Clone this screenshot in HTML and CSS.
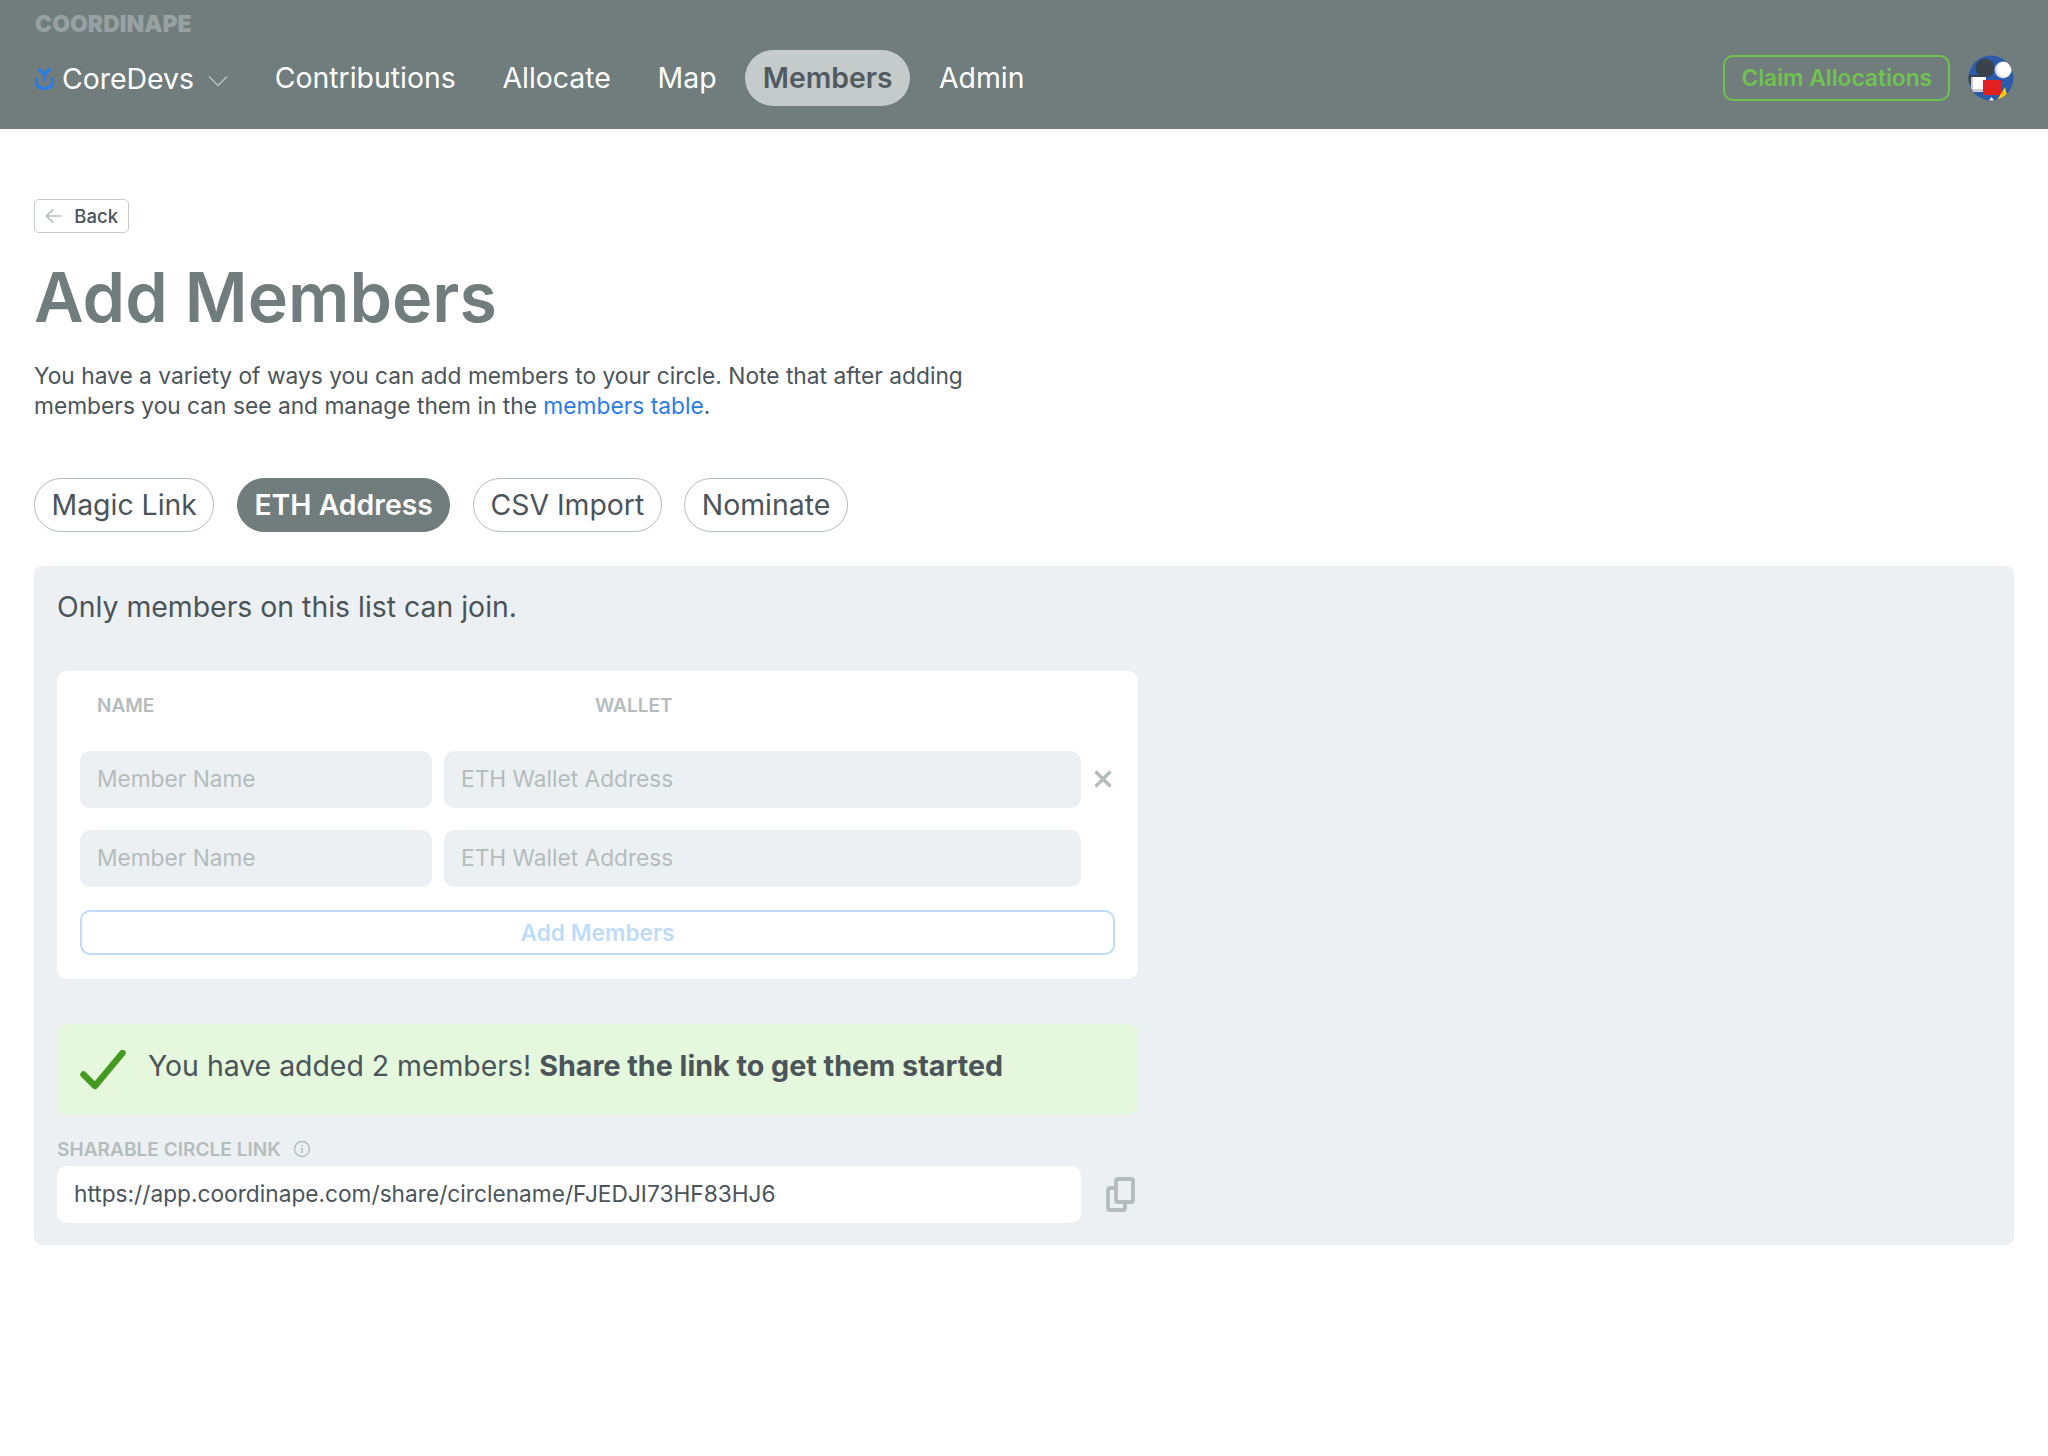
FILE: index.html
```html
<!DOCTYPE html>
<html lang="en">
<head>
<meta charset="utf-8">
<title>Add Members</title>
<link rel="stylesheet" href="styles.css">
</head>
<body>
<header class="topbar">
  <div class="brand">COORDINAPE</div>
  <div class="navrow">
    <nav class="nav">
      <a class="circle">
        <svg class="circle-logo" viewBox="0 0 19 23" width="19" height="23"><path d="M3.500 1.500 9.500 7.500l6-6M9.500 7.500v7" fill="none" stroke="#2b7ce9" stroke-width="3.200"/><path d="M1.600 10.500v5c0 3.800 3.500 5.800 7.900 5.800s7.900-2 7.900-5.800v-5" fill="none" stroke="#2b7ce9" stroke-width="3.200"/></svg>
        <span>CoreDevs</span>
        <svg class="chev" viewBox="0 0 20 12" width="20" height="12"><path d="M1 1.500 10 10.500l9-9" fill="none" stroke="#b9c0c0" stroke-width="1.500"/></svg>
      </a>
      <a class="link">Contributions</a>
      <a class="link">Allocate</a>
      <a class="link">Map</a>
      <a class="link active">Members</a>
      <a class="link">Admin</a>
    </nav>
    <div class="top-right">
      <a class="claim">Claim Allocations</a>
      <svg class="avatar" viewBox="0 0 46 46" width="46" height="46">
        <defs><clipPath id="av"><circle cx="23" cy="23" r="22.500"/></clipPath></defs>
        <g clip-path="url(#av)">
          <rect width="46" height="46" fill="#2b5bab"/>
          <circle cx="17" cy="13" r="9.500" fill="#3a434c"/>
          <rect x="0" y="20" width="14" height="9" fill="#3a434c"/>
          <circle cx="35" cy="15" r="8.500" fill="#c9cdd0"/>
          <circle cx="36" cy="14.500" r="7.500" fill="#fff"/>
          <rect x="3" y="22" width="15" height="15" fill="#c9cdd0"/>
          <rect x="5" y="22" width="13" height="12" fill="#fff"/>
          <rect x="15" y="25" width="18" height="15" fill="#e2201f"/>
          <path d="M29 45 37 32l3 12z" fill="#f5c518"/>
          <path d="M20 47l3.500-5 3.500 5z" fill="#fff"/>
        </g>
      </svg>
    </div>
  </div>
</header>
<main class="page">
  <a class="back">
    <svg viewBox="0 0 18 16" width="18" height="16"><path d="M17.500 8H1.500M8.500 1 1.500 8l7 7" fill="none" stroke="#b9c0c0" stroke-width="1.800"/></svg>
    <span>Back</span>
  </a>
  <h1 class="title">Add Members</h1>
  <p class="intro">You have a variety of ways you can add members to your circle. Note that after adding members you can see and manage them in the <a class="inline">members table</a>.</p>
  <div class="tabs">
    <a class="tab">Magic Link</a>
    <a class="tab on">ETH Address</a>
    <a class="tab">CSV Import</a>
    <a class="tab">Nominate</a>
  </div>
  <section class="panel">
    <p class="lead">Only members on this list can join.</p>
    <div class="card">
      <div class="heads"><span class="h-name">NAME</span><span class="h-wallet">WALLET</span></div>
      <div class="row">
        <div class="field name">Member Name</div>
        <div class="field wallet">ETH Wallet Address</div>
        <svg class="x" viewBox="0 0 18 18" width="18" height="18"><path d="M1.500 1.500l15 15M16.500 1.500l-15 15" fill="none" stroke="#b4bcbc" stroke-width="3.400"/></svg>
      </div>
      <div class="row">
        <div class="field name">Member Name</div>
        <div class="field wallet">ETH Wallet Address</div>
      </div>
      <a class="add">Add Members</a>
    </div>
    <div class="banner">
      <svg class="check" viewBox="0 0 46 40" width="46" height="40"><path d="M3.500 24.500 15 36 42.500 3" fill="none" stroke="#459820" stroke-width="6.500" stroke-linecap="round" stroke-linejoin="round"/></svg>
      <p class="banner-text">You have added 2 members! <strong>Share the link to get them started</strong></p>
    </div>
    <div class="link-label">SHARABLE CIRCLE LINK
      <svg viewBox="0 0 18 18" width="18" height="18"><circle cx="9" cy="9" r="7.500" fill="none" stroke="#b4bcbc" stroke-width="1.400"/><path d="M9 8v5M9 5v1.500" stroke="#b4bcbc" stroke-width="1.600"/></svg>
    </div>
    <div class="share-row">
      <div class="field url">https://app.coordinape.com/share/circlename/FJEDJI73HF83HJ6</div>
      <svg class="copy" viewBox="0 0 29 35" width="29" height="35"><rect x="10" y="2" width="17" height="23" rx="2" fill="none" stroke="#b4bcbc" stroke-width="3.800"/><path d="M10 11H4a2 2 0 0 0-2 2v18a2 2 0 0 0 2 2h13a2 2 0 0 0 2-2v-6" fill="none" stroke="#b4bcbc" stroke-width="3.800"/></svg>
    </div>
  </section>
</main>
</body>
</html>
```
FILE: styles.css
```css
* { box-sizing: border-box; }
html, body { margin: 0; padding: 0; }
body { font-family: Inter, "Liberation Sans", sans-serif; background: #fff; color: #4b5459; width: 2048px; min-height: 1456px; }
a { text-decoration: none; color: inherit; }
p, h1 { margin: 0; }

.topbar { height: 129px; background: #717c7d; padding: 12px 34px 0; display: flex; flex-direction: column; }
.brand { margin-left: 1px; font-size: 23px; line-height: 24px; font-weight: 900; color: #98a1a2; }
.navrow { display: flex; align-items: center; justify-content: space-between; margin-top: 14px; }
.nav { display: flex; align-items: center; gap: 10.750px; color: #fff; font-size: 28.4px; }
.circle { display: flex; align-items: center; gap: 8px; margin-right: 18px; }
.circle-logo { flex: none; margin-left: 1px; }
.chev { margin-left: 6px; margin-top: 6px; }
.link { height: 56px; line-height: 56px; padding: 0 18px; border-radius: 28px; }
.link.active { background: #c5cbcb; color: #515b5f; font-weight: 600; padding: 0 17.500px; }
.top-right { display: flex; align-items: center; gap: 18px; }
.claim { height: 46px; line-height: 42px; padding: 0 16px; border: 2px solid #6fc34e; border-radius: 10px; color: #6fc34e; font-size: 22.7px; font-weight: 600; }
.avatar { display: block; }

.page { padding: 70px 34px 0; }
.back { display: flex; align-items: center; gap: 12px; width: 95px; height: 34px; padding: 0 10px; border: 1.500px solid #c5cbcb; border-radius: 5px; font-size: 18.5px; font-weight: 500; }
.title { margin-top: 22px; font-size: 68.2px; line-height: 84px; font-weight: 600; color: #717c7d; }
.intro { margin-top: 22px; width: 960px; font-size: 22.75px; line-height: 30px; }
.inline { color: #2b7ce9; }

.tabs { display: flex; gap: 22.500px; margin-top: 57px; }
.tab { height: 54px; line-height: 52px; padding: 0 16.500px; border: 1.500px solid #b4bcbc; border-radius: 27px; font-size: 28.4px; }
.tab.on { background: #717c7d; border-color: #717c7d; color: #fff; font-weight: 600; }

.panel { margin-top: 34px; height: 679px; background: #edf0f3; border-radius: 8px; padding: 23px; }
.lead { font-size: 28.4px; line-height: 36px; }
.card { margin-top: 46px; width: 1081px; height: 308px; background: #fff; border-radius: 10px; padding: 23px 23px; }
.heads { display: flex; height: 24px; font-size: 19px; line-height: 24px; font-weight: 600; color: #b4bcbc; }
.h-name { margin-left: 17px; width: 498px; }
.row { display: flex; align-items: center; gap: 12px; margin-top: 33px; height: 57px; }
.row + .row { margin-top: 22px; }
.field { height: 57px; line-height: 56px; padding: 0 17px; border-radius: 10px; background: #edf0f3; font-size: 22.7px; color: #b4bcbc; }
.name { width: 352px; }
.wallet { width: 637px; }
.x { margin-left: 1px; margin-top: -1px; }
.add { display: block; margin-top: 23px; height: 45px; line-height: 41px; border: 2px solid #bedcfa; border-radius: 10px; text-align: center; color: #bedcfa; font-size: 22.7px; font-weight: 600; }

.banner { margin-top: 45px; width: 1081px; height: 91px; background: #e5f7dd; border-radius: 10px; display: flex; align-items: center; padding: 0 23px; gap: 22px; }
.check { flex: none; }
.banner-text { font-size: 28.4px; margin-top: -9px; }
.banner-text strong { font-weight: 700; font-size: 28.7px; }
.link-label { margin-top: 23px; display: flex; align-items: center; gap: 12px; height: 22px; font-size: 19.1px; font-weight: 600; color: #b4bcbc; }
.share-row { display: flex; align-items: center; gap: 25px; margin-top: 6px; }
.url { width: 1024px; background: #fff; color: #4b5459; }
```
